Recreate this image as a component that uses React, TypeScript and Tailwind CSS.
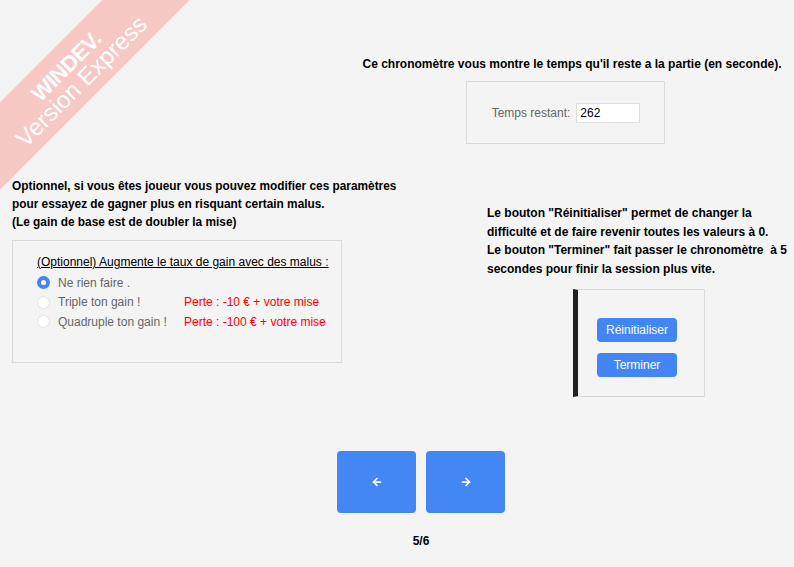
import { ArrowLeft, ArrowRight } from 'lucide-react';

const font = { fontFamily: '"Liberation Sans", Arial, sans-serif' };

function Radio({ checked }: { checked?: boolean }) {
  if (checked) {
    return (
      <span className="flex h-[13px] w-[13px] shrink-0 items-center justify-center rounded-full bg-[#4285f4]">
        <span className="h-[5px] w-[5px] rounded-full bg-white" />
      </span>
    );
  }
  return <span className="h-[13px] w-[13px] shrink-0 rounded-full border border-[#e2e2e2] bg-white" />;
}

const options = [
  { label: 'Ne rien faire .', loss: '', checked: true },
  { label: 'Triple ton gain !', loss: 'Perte : -10 € + votre mise' },
  { label: 'Quadruple ton gain !', loss: 'Perte : -100 € + votre mise' },
];

export default function App() {
  return (
    <div
      className="relative h-[567px] w-[794px] overflow-hidden bg-[#f4f4f4] text-[12px] text-black"
      style={font}
    >
      {/* WINDEV watermark ribbon */}
      <div className="pointer-events-none absolute left-[73px] top-[73px] h-0 w-0">
        <div className="absolute left-[-200px] top-[-31px] flex h-[62px] w-[400px] -rotate-45 flex-col items-center justify-center bg-[#f8c8c4] pt-[3px] text-white">
          <span className="text-[22px] font-bold leading-[20px] tracking-tight">WINDEV.</span>
          <span className="text-[24px] leading-[21px]">Version Express</span>
        </div>
      </div>

      {/* chrono */}
      <div className="ml-[361px] flex w-[422px] flex-col items-center pt-[55px]">
        <p className="whitespace-nowrap text-[12px] font-bold leading-[18px]">
          Ce chronomètre vous montre le temps qu'il reste a la partie (en seconde).
        </p>
        <div className="mr-[14px] mt-[8px] flex h-[63px] w-[199px] items-center justify-center gap-[6px] border border-[#d9d9d9] pl-[2px]">
          <span className="text-[#666]">Temps restant:</span>
          <span className="flex h-[20px] w-[64px] items-center border border-[#dedede] bg-white px-[3px]">262</span>
        </div>
      </div>

      {/* middle */}
      <div className="mt-[33px] flex items-start">
        <div className="w-[487px] pl-[12px]">
          <p className="whitespace-nowrap text-[11.85px] font-bold leading-[18px]">
            Optionnel, si vous êtes joueur vous pouvez modifier ces paramètres
            <br />
            pour essayez de gagner plus en risquant certain malus.
            <br />
            (Le gain de base est de doubler la mise)
          </p>
          <div className="mt-[9px] h-[123px] w-[330px] border border-[#d9d9d9] pl-[24px] pt-[12px]">
            <p className="whitespace-nowrap leading-[18px] underline">(Optionnel) Augmente le taux de gain avec des malus :</p>
            <div className="mt-[2px] flex flex-col">
              {options.map((o) => (
                <div key={o.label} className="flex h-[19.5px] items-center">
                  <Radio checked={o.checked} />
                  <span className="ml-[8px] w-[126px] text-[#666]">{o.label}</span>
                  <span className="text-[#ff0000]">{o.loss}</span>
                </div>
              ))}
            </div>
          </div>
        </div>

        <div className="pt-[27px]">
          <p className="w-[300px] font-bold leading-[18.5px]">
            Le bouton "Réinitialiser" permet de changer la difficulté et de faire revenir toutes les valeurs à 0.
            <br />
            Le bouton "Terminer" fait passer le chronomètre&nbsp; à 5 secondes pour finir la session plus vite.
          </p>
          <div className="ml-[86px] mt-[11px] flex h-[108px] w-[132px] flex-col items-center gap-[11px] border border-l-[5px] border-[#d9d9d9] border-l-[#1c2126] pr-[8px] pt-[28px]">
            <button className="h-[24px] w-[80px] rounded-[4px] bg-[#4285f4] text-[12px] text-white">Réinitialiser</button>
            <button className="h-[24px] w-[80px] rounded-[4px] bg-[#4285f4] text-[12px] text-white">Terminer</button>
          </div>
        </div>
      </div>

      {/* navigation */}
      <div className="ml-[337px] mt-[54px] flex gap-[10px]">
        <button className="flex h-[62px] w-[79px] items-center justify-center rounded-[4px] bg-[#4287f4] text-white">
          <ArrowLeft size={12} strokeWidth={3.5} />
        </button>
        <button className="flex h-[62px] w-[79px] items-center justify-center rounded-[4px] bg-[#4287f4] text-white">
          <ArrowRight size={12} strokeWidth={3.5} />
        </button>
      </div>
      <p className="ml-[337px] mt-[19px] w-[168px] text-center font-bold leading-[18px]">5/6</p>
    </div>
  );
}
